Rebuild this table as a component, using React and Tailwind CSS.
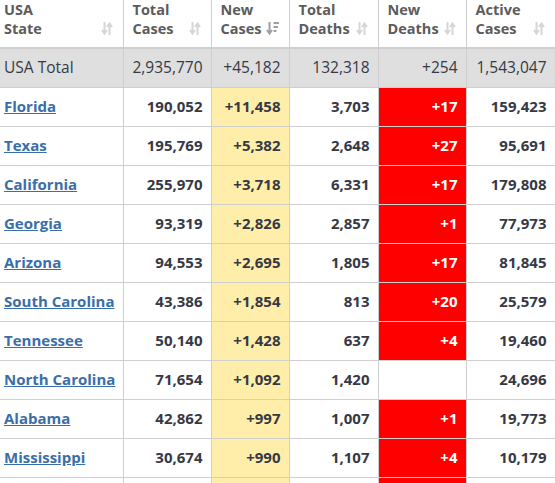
import React from 'react';

// USA states table: header, total row, state rows
const rows = [
  ['Florida', '190,052', '+11,458', '3,703', '+17', '159,423'],
  ['Texas', '195,769', '+5,382', '2,648', '+27', '95,691'],
  ['California', '255,970', '+3,718', '6,331', '+17', '179,808'],
  ['Georgia', '93,319', '+2,826', '2,857', '+1', '77,973'],
  ['Arizona', '94,553', '+2,695', '1,805', '+17', '81,845'],
  ['South Carolina', '43,386', '+1,854', '813', '+20', '25,579'],
  ['Tennessee', '50,140', '+1,428', '637', '+4', '19,460'],
  ['North Carolina', '71,654', '+1,092', '1,420', '', '24,696'],
  ['Alabama', '42,862', '+997', '1,007', '+1', '19,773'],
  ['Mississippi', '30,674', '+990', '1,107', '+4', '10,179'],
];

function SortIcon() {
  return (
    <svg width="12" height="15" viewBox="0 0 12 15" className="shrink-0">
      <path d="M3.5 1v11M1 9l2.5 3.5L6 9" stroke="#d6d6d6" strokeWidth="2" fill="none" />
      <path d="M8.5 14V3M6 6l2.5-3.5L11 6" stroke="#d6d6d6" strokeWidth="2" fill="none" />
    </svg>
  );
}

function SortDownIcon() {
  return (
    <svg width="13" height="15" viewBox="0 0 13 15" className="shrink-0">
      <path d="M3.5 1v11M1 9l2.5 3.5L6 9" stroke="#a0a0a0" strokeWidth="2" fill="none" />
      <path d="M7.5 2h5.5M7.5 6h4.5M7.5 10h3" stroke="#a0a0a0" strokeWidth="2" fill="none" />
    </svg>
  );
}

function Th({ l1, l2, down, first }) {
  return (
    <th className={'border-r border-[#cfcfcf] last:border-r-0 pr-[10px] pt-0 pb-1 text-left align-top font-bold text-[14.5px] leading-[19px] text-[#5c5c5c] ' + (first ? 'pl-1' : 'pl-[9px]')}>
      <div>{l1}</div>
      <div className="flex items-center justify-between">
        <span>{l2}</span>
        {down ? <SortDownIcon /> : <SortIcon />}
      </div>
    </th>
  );
}

const num = 'pl-1 pr-2 text-right whitespace-nowrap border-r border-[#cfcfcf]';

export default function App() {
  return (
    <div className="w-[556px] h-[483px] overflow-hidden bg-white" style={{ fontFamily: '"Open Sans", sans-serif' }}>
      <table className="w-[555px] table-fixed border-collapse border-r border-[#cfcfcf]">
        <colgroup>
          <col className="w-[123px]" />
          <col className="w-[88px]" />
          <col className="w-[78px]" />
          <col className="w-[89px]" />
          <col className="w-[88px]" />
          <col className="w-[89px]" />
        </colgroup>
        <thead>
          <tr className="h-[48px] border-b-2 border-[#cfcfcf]">
            <Th l1="USA" l2="State" first />
            <Th l1="Total" l2="Cases" />
            <Th l1="New" l2="Cases" down />
            <Th l1="Total" l2="Deaths" />
            <Th l1="New" l2="Deaths" />
            <Th l1="Active" l2="Cases" />
          </tr>
        </thead>
        <tbody className="text-[15px] text-[#363945]">
          <tr className="h-[39px] bg-[#dfdfdf] border-b border-[#cfcfcf] text-[15.5px]">
            <td className="px-1 border-r border-[#cfcfcf]">USA Total</td>
            <td className={num}>2,935,770</td>
            <td className={num}>+45,182</td>
            <td className={num}>132,318</td>
            <td className={num}>+254</td>
            <td className="pl-1 pr-2 text-right">1,543,047</td>
          </tr>
          {rows.map((r) => (
            <tr key={r[0]} className="h-[39px] border-b border-[#cfcfcf] font-bold">
              <td className="px-1 border-r border-[#cfcfcf]">
                <a href="#" className="text-[#3a6ea8] underline">{r[0]}</a>
              </td>
              <td className={num}>{r[1]}</td>
              <td className={num + ' bg-[#ffeeaa]'}>{r[2]}</td>
              <td className={num}>{r[3]}</td>
              <td className={num + ' text-white ' + (r[4] ? 'bg-[#ff0000]' : 'bg-white')}>{r[4]}</td>
              <td className="pl-1 pr-2 text-right">{r[5]}</td>
            </tr>
          ))}
          <tr className="h-[39px]">
            <td className="border-r border-[#cfcfcf]" />
            <td className="border-r border-[#cfcfcf]" />
            <td className="border-r border-[#cfcfcf] bg-[#ffeeaa]" />
            <td className="border-r border-[#cfcfcf]" />
            <td className="border-r border-[#cfcfcf] bg-[#ff0000]" />
            <td />
          </tr>
        </tbody>
      </table>
    </div>
  );
}
